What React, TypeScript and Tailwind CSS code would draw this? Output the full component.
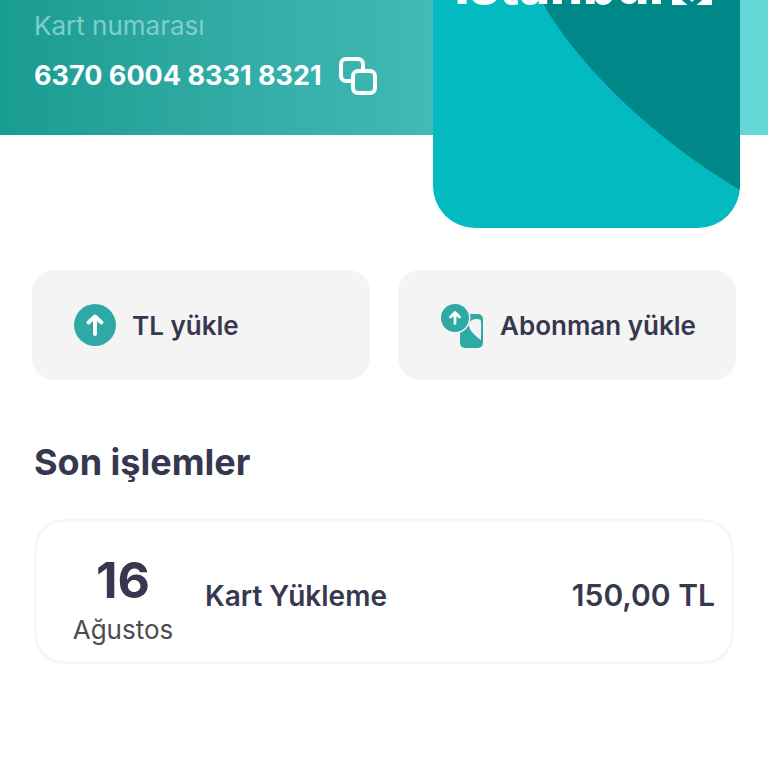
type Transaction = {
  id: string;
  day: string;
  month: string;
  title: string;
  amount: string;
};

const transactions: Transaction[] = [
  { id: "t1", day: "16", month: "Ağustos", title: "Kart Yükleme", amount: "150,00 TL" },
];

function CopyIcon() {
  return (
    <svg viewBox="0 0 40 40" className="size-10" fill="none" stroke="currentColor" strokeWidth="4" aria-hidden>
      <path d="M14 25H8a5 5 0 0 1-5-5V8a5 5 0 0 1 5-5h12a5 5 0 0 1 5 5v6" />
      <rect x="15" y="15" width="22" height="22" rx="5" />
    </svg>
  );
}

function LoadIcon() {
  return (
    <svg viewBox="0 0 42 42" className="size-[42px]" aria-hidden>
      <circle cx="21" cy="21" r="21" fill="#2fa9a5" />
      <path d="M21 30V14M14.5 18.5l6.5-6 6.5 6" fill="none" stroke="#fff" strokeWidth="4" strokeLinecap="round" strokeLinejoin="round" />
    </svg>
  );
}

function PassIcon() {
  return (
    <svg viewBox="0 0 44 46" className="h-[46px] w-11" aria-hidden>
      <rect x="20" y="12" width="23" height="34" rx="5" fill="#2fa9a5" />
      <path d="M41 20v18C34 33 29 28 29 23c0-3.5 3-6 7.5-6 3.5 0 4.5 1 4.5 3Z" fill="#f4f4f4" />
      <circle cx="15" cy="16" r="15.5" fill="#f4f4f4" />
      <circle cx="15" cy="16" r="14" fill="#2fa9a5" />
      <path d="M15 21.5v-10M10.5 15l4.5-4.5 4.5 4.5" fill="none" stroke="#fff" strokeWidth="2.8" strokeLinecap="round" strokeLinejoin="round" />
    </svg>
  );
}

function TravelCard() {
  return (
    <div className="absolute top-0 right-7 h-[228px] w-2/5 overflow-hidden rounded-b-[42px] bg-[#02babf]">
      <svg viewBox="0 0 307 228" preserveAspectRatio="none" className="absolute inset-0 size-full" aria-hidden>
        <path d="M108 0C142 62 217 137 307 190V0Z" fill="#008788" />
      </svg>
      <div className="relative -mt-11 flex items-end gap-2 pl-[22px] text-white">
        <span className="text-[52px] leading-[60px] font-extrabold">istanbul</span>
        <svg viewBox="0 0 41 42" className="mb-2 h-[42px] w-10 shrink-0" fill="currentColor" aria-hidden>
          <path d="M0 39.5V26l16 13.5ZM41 39.5V26L25 39.5Z" />
          <path d="M12 28l8.5 8.5L29 28Z" />
        </svg>
      </div>
    </div>
  );
}

function TransactionRow({ item }: { item: Transaction }) {
  return (
    <li className="flex h-[145px] items-center rounded-[30px] border-3 border-[#f7f7f7] pr-4 pl-8">
      <div className="flex w-[108px] flex-col items-center pt-5">
        <span className="text-[50px] leading-[56px] font-bold">{item.day}</span>
        <span className="text-[26px] leading-[44px] text-[#4c4c52]">{item.month}</span>
      </div>
      <span className="ml-7 pt-2 text-[28px] font-semibold">{item.title}</span>
      <span className="ml-auto pt-2 text-[30px] font-semibold">{item.amount}</span>
    </li>
  );
}

export default function App() {
  return (
    <div className="min-h-screen overflow-hidden bg-white font-['Inter',sans-serif] text-[#37374f]">
      <header className="relative h-[135px] bg-linear-to-r from-[#199c92] via-[#3db6b2] to-[#66d8d7] pt-2 pl-[34px]">
        <p className="text-[26px] leading-9 text-[#7fcfc9]">Kart numarası</p>
        <div className="flex items-center gap-4 pt-3 text-white">
          <span className="text-[27px] leading-[38px] font-bold">6370 6004 8331 8321</span>
          <button type="button" aria-label="Kart numarasını kopyala">
            <CopyIcon />
          </button>
        </div>
        <TravelCard />
      </header>

      <main className="pt-[135px]">
        <div className="grid grid-cols-2 gap-7 px-8">
          <button type="button" className="flex h-[110px] items-center gap-4 rounded-[22px] bg-[#f4f4f4] pl-[42px] text-[26px] font-semibold">
            <LoadIcon />
            TL yükle
          </button>
          <button type="button" className="flex h-[110px] items-center gap-4 rounded-[22px] bg-[#f4f4f4] pl-[42px] text-[26px] font-semibold">
            <PassIcon />
            Abonman yükle
          </button>
        </div>

        <section className="px-[34px] pt-[58px]">
          <h2 className="text-4xl leading-[48px] font-bold">Son işlemler</h2>
          <ul className="pt-[33px]">
            {transactions.map((item) => (
              <TransactionRow key={item.id} item={item} />
            ))}
          </ul>
        </section>
      </main>
    </div>
  );
}
